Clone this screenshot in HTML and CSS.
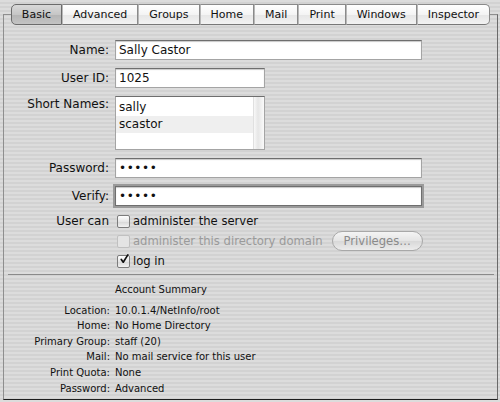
FILE: index.html
```html
<!DOCTYPE html>
<html lang="en">
<head>
    <meta charset="UTF-8">
    <title>User Account - Basic</title>
    <link rel="stylesheet" href="styles.css">
</head>
<body>
    <div class="panel">
        <div class="tabs">
            <div class="tab active">Basic</div>
            <div class="tab">Advanced</div>
            <div class="tab">Groups</div>
            <div class="tab">Home</div>
            <div class="tab">Mail</div>
            <div class="tab">Print</div>
            <div class="tab">Windows</div>
            <div class="tab">Inspector</div>
        </div>

        <div class="form">
            <label class="label">Name:</label>
            <div class="field wide">Sally Castor</div>

            <label class="label">User ID:</label>
            <div class="field narrow">1025</div>

            <label class="label top">Short Names:</label>
            <div class="list">
                <div class="rows">
                    <div class="row">sally</div>
                    <div class="row alt">scastor</div>
                </div>
                <div class="scroller"></div>
            </div>

            <label class="label">Password:</label>
            <div class="field wide dots">&bull;&bull;&bull;&bull;&bull;</div>

            <label class="label">Verify:</label>
            <div class="field wide dots focused">&bull;&bull;&bull;&bull;&bull;</div>
        </div>

        <div class="checks">
            <div class="label">User can</div>
            <div class="check-row">
                <span class="box"></span>
                <span>administer the server</span>
            </div>

            <div class="label"></div>
            <div class="check-row disabled">
                <span class="box"></span>
                <span>administer this directory domain</span>
                <span class="pill">Privileges&hellip;</span>
            </div>

            <div class="label"></div>
            <div class="check-row">
                <span class="box checked">
                    <svg width="13" height="13" viewBox="0 0 13 13">
                        <path d="M3 6.5 L5.5 10 L11.5 0.5" fill="none" stroke="#111" stroke-width="2.2" stroke-linecap="round" stroke-linejoin="round"/>
                    </svg>
                </span>
                <span>log in</span>
            </div>
        </div>

        <hr class="sep">

        <div class="summary">
            <div class="skey"></div>
            <div class="sval title">Account Summary</div>
            <div class="skey">Location:</div>
            <div class="sval">10.0.1.4/NetInfo/root</div>
            <div class="skey">Home:</div>
            <div class="sval">No Home Directory</div>
            <div class="skey">Primary Group:</div>
            <div class="sval">staff (20)</div>
            <div class="skey">Mail:</div>
            <div class="sval">No mail service for this user</div>
            <div class="skey">Print Quota:</div>
            <div class="sval">None</div>
            <div class="skey">Password:</div>
            <div class="sval">Advanced</div>
        </div>
    </div>
</body>
</html>
```

FILE: styles.css
```css
body {
    margin: 0;
    height: 402px;
    overflow: hidden;
    font-family: "DejaVu Sans", Verdana, sans-serif;
    font-size: 12px;
    color: #111;
    background: repeating-linear-gradient(#dcdcdc 0px, #dcdcdc 2px, #d2d2d2 2px, #d2d2d2 4px);
}
.panel {
    box-sizing: border-box;
    height: 386px;
    margin: 14px 2px 0 3px;
    border: 1px solid #8e8e8e;
    border-bottom-color: #1e1e1e;
    border-right-color: #6a6a6a;
}
.tabs {
    display: flex;
    justify-content: center;
    margin-top: -11px;
}
.tab {
    flex: none;
    height: 19px;
    line-height: 19px;
    padding: 0 10px;
    font-size: 11px;
    border: 1px solid #8a8a8a;
    border-left: 1px solid #b8b8b8;
    border-bottom-color: #777;
    background: linear-gradient(#ffffff, #f4f4f4 50%, #e6e6e6 51%, #f2f2f2);
}
.tab:first-child {
    border-left-color: #8a8a8a;
    border-radius: 5px 0 0 5px;
}
.tab:last-child {
    border-radius: 0 5px 5px 0;
}
.tab.active {
    background: linear-gradient(#d9d9d9, #c6c6c6 50%, #b4b4b4 51%, #c4c4c4);
    border-color: #6c6c6c;
}

.form {
    display: grid;
    grid-template-columns: 105px 1fr;
    column-gap: 6px;
    row-gap: 8px;
    padding-top: 15px;
}
.label {
    text-align: right;
    line-height: 20px;
    font-size: 12px;
}
.label.top {
    line-height: 16px;
}
.field {
    box-sizing: border-box;
    height: 20px;
    line-height: 18px;
    padding: 0 3px;
    background: #fff;
    border: 1px solid #a4a4a4;
    border-top-color: #6e6e6e;
    box-shadow: inset 0 1px 1px #c8c8c8;
}
.wide {
    width: 307px;
}
.narrow {
    width: 150px;
}
.dots {
    font-size: 12px;
    letter-spacing: 0.6px;
}
.focused {
    box-shadow: 0 0 0 2px #9a9a9a, inset 0 1px 1px #c8c8c8;
    border-color: #6e6e6e;
}
.list {
    box-sizing: border-box;
    display: flex;
    width: 150px;
    height: 54px;
    background: #fff;
    border: 1px solid #a4a4a4;
    border-top-color: #6e6e6e;
}
.rows {
    flex: 1;
    padding-top: 2px;
}
.row {
    height: 17px;
    line-height: 16px;
    padding-left: 3px;
}
.row.alt {
    background: #efefef;
}
.scroller {
    width: 10px;
    background: linear-gradient(to right, #f8f8f8, #e6e6e6 40%, #fafafa);
    border-left: 1px solid #e0e0e0;
}

.checks {
    display: grid;
    grid-template-columns: 105px 1fr;
    column-gap: 6px;
    margin-top: 5px;
}
.check-row {
    display: flex;
    align-items: center;
    gap: 3px;
    height: 20px;
    padding-left: 2px;
    font-size: 11.6px;
}
.box {
    box-sizing: border-box;
    width: 13px;
    height: 13px;
    border: 1px solid #7c7c7c;
    border-radius: 2px;
    background: linear-gradient(#ffffff, #e6e6e6 50%, #d6d6d6 51%, #f2f2f2);
    display: flex;
    align-items: center;
    justify-content: center;
}
.box svg {
    margin-top: -3px;
    margin-left: 1px;
}
.disabled {
    color: #9a9a9a;
}
.disabled .box {
    border-color: #c0c0c0;
    background: #e4e4e4;
}
.pill {
    margin-left: 6px;
    height: 18px;
    line-height: 18px;
    padding: 0 11px;
    border: 1px solid #a8a8a8;
    border-radius: 10px;
    background: linear-gradient(#f4f4f4, #e4e4e4 50%, #d8d8d8 51%, #ececec);
    color: #8a8a8a;
}

.sep {
    margin: 3px 3px 0 4px;
    border: 0;
    border-top: 1px solid #8a8a8a;
    height: 0;
}

.summary {
    display: grid;
    grid-template-columns: 106px 1fr;
    column-gap: 5px;
    margin-top: 7px;
    font-size: 10px;
}
.skey {
    text-align: right;
    line-height: 15.6px;
}
.sval {
    line-height: 15.6px;
}
.sval.title {
    margin-bottom: 5px;
}
```
